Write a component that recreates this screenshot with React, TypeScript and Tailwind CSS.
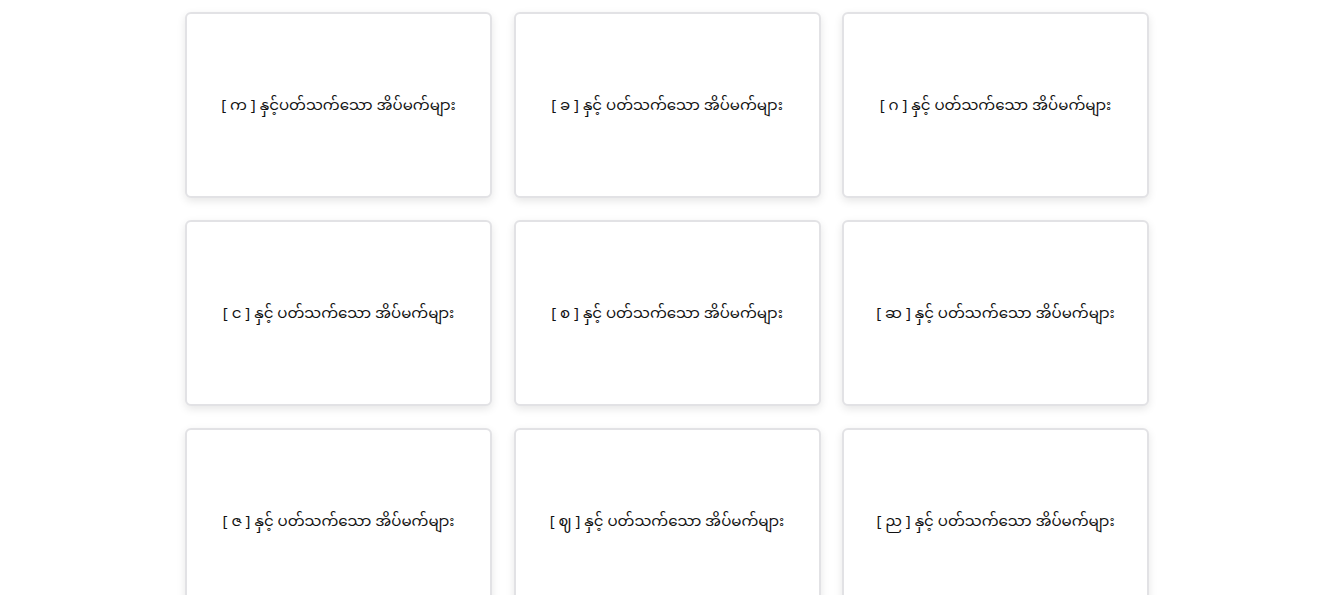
import React from 'react';

const letters = ['က', 'ခ', 'ဂ', 'င', 'စ', 'ဆ', 'ဇ', 'ဈ', 'ည'];

export default function App() {
  return (
    <div className="min-h-screen bg-white pl-[1px] font-['Noto_Sans_Myanmar','Padauk','Myanmar_Text','Noto_Sans',sans-serif]">
      <div className="pt-3 grid grid-cols-[307px_307px_307px] justify-center gap-x-[21.5px] gap-y-[22px]">
        {letters.map((l, i) => (
          <div
            key={l}
            className="h-[186px] flex items-center justify-center pt-[4px] rounded-md border-2 border-[#e2e2e5] bg-white shadow-[0_3px_8px_rgba(0,0,0,0.1)]"
          >
            <p className="text-[15px] text-[#111]">
              [ {l} ] {i === 0 ? 'နှင့်ပတ်သက်သော' : 'နှင့် ပတ်သက်သော'} အိပ်မက်များ
            </p>
          </div>
        ))}
      </div>
    </div>
  );
}
